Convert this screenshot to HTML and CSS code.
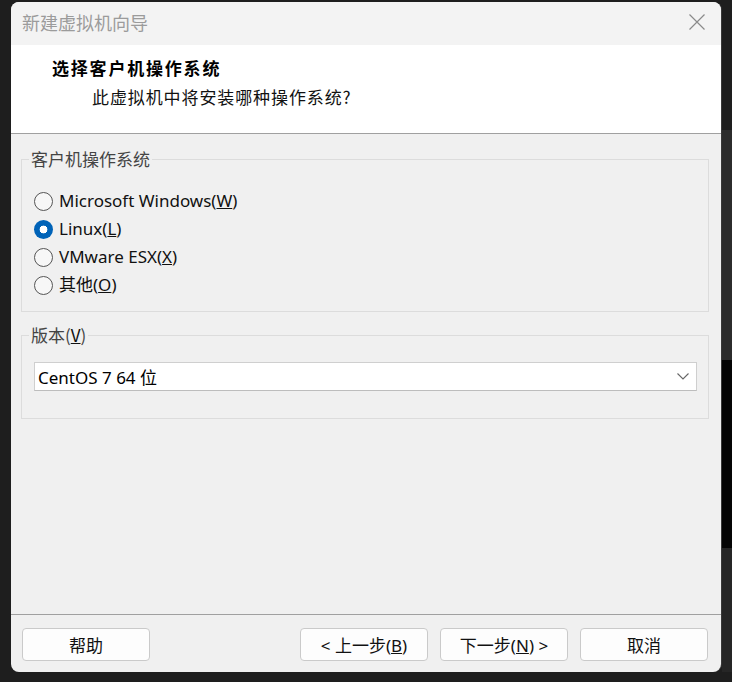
FILE: index.html
```html
<!DOCTYPE html>
<html lang="zh-CN">
<head>
<meta charset="utf-8">
<title>新建虚拟机向导</title>
<link rel="stylesheet" href="styles.css">
</head>
<body>
<div class="desk">
  <div class="window">
    <div class="titlebar">
      <span class="title">新建虚拟机向导</span>
      <svg class="close" width="16" height="16" viewBox="0 0 16 16"><path d="M0.5 0.5L15.5 15.5M15.5 0.5L0.5 15.5"/></svg>
    </div>
    <div class="header">
      <div class="heading">选择客户机操作系统</div>
      <div class="subheading">此虚拟机中将安装哪种操作系统?</div>
    </div>
    <div class="content">
      <fieldset class="group os">
        <legend>客户机操作系统</legend>
        <div class="radio-row"><span class="radio"></span><span class="label">Microsoft Windows(<u>W</u>)</span></div>
        <div class="radio-row"><span class="radio checked"></span><span class="label">Linux(<u>L</u>)</span></div>
        <div class="radio-row"><span class="radio"></span><span class="label">VMware ESX(<u>X</u>)</span></div>
        <div class="radio-row"><span class="radio"></span><span class="label">其他(<u>O</u>)</span></div>
      </fieldset>
      <fieldset class="group version">
        <legend>版本(<u>V</u>)</legend>
        <div class="select">
          <span class="value">CentOS 7 64 位</span>
          <svg class="chevron" width="12" height="7" viewBox="0 0 12 7"><path d="M0.5 0.5L6 6L11.5 0.5"/></svg>
        </div>
      </fieldset>
    </div>
    <div class="footer">
      <button class="btn">帮助</button>
      <div class="nav">
        <button class="btn">&lt; 上一步(<u>B</u>)</button>
        <button class="btn">下一步(<u>N</u>) &gt;</button>
        <button class="btn">取消</button>
      </div>
    </div>
  </div>
  <div class="edge"></div>
</div>
</body>
</html>
```
FILE: styles.css
```css
html, body {
  margin: 0;
  padding: 0;
}
body {
  width: 732px;
  height: 682px;
  overflow: hidden;
  background: #1e1e1e;
  font-family: "Noto Sans", "Noto Sans CJK SC", sans-serif;
  color: #111;
}
.desk {
  display: flex;
  height: 682px;
  box-sizing: border-box;
  padding: 2px 0 0 11px;
}
.window {
  width: 710px;
  height: 670px;
  display: flex;
  flex-direction: column;
  background: #f0f0f0;
  border-radius: 8px;
  overflow: hidden;
  box-shadow: 1px 0 0 #3a3a3a;
}
.edge {
  flex: 1;
  margin-top: -2px;
  margin-left: 1px;
  height: 682px;
  background: linear-gradient(to bottom, #1e1e1e 0, #1e1e1e 130px, #2c2c2c 130px, #2c2c2c 360px, #050505 360px, #050505 548px, #262626 548px, #262626 672px, #1e1e1e 672px);
}
.titlebar {
  height: 43px;
  flex: none;
  box-sizing: border-box;
  background: #f3f3f3;
  display: flex;
  align-items: center;
  justify-content: space-between;
  padding: 0 16px 3px 11px;
}
.title {
  font-family: "Noto Sans CJK SC", sans-serif;
  font-size: 18px;
  color: #9b9b9b;
  line-height: 20px;
}
.close {
  display: block;
}
.close path {
  stroke: #8a8a8a;
  stroke-width: 1.2;
  fill: none;
}
.header {
  flex: none;
  height: 89px;
  box-sizing: border-box;
  background: #ffffff;
  border-bottom: 1px solid #a0a0a0;
  padding: 12px 0 0 41px;
}
.heading {
  font-family: "Noto Sans CJK SC", sans-serif;
  font-size: 17px;
  font-weight: 700;
  line-height: 22px;
  letter-spacing: 1.8px;
  color: #000;
}
.subheading {
  font-family: "Noto Sans CJK SC", sans-serif;
  font-size: 17px;
  line-height: 22px;
  letter-spacing: 0.9px;
  margin: 7px 0 0 40px;
  color: #111;
}
.content {
  flex: 1;
  padding: 15px 12px 0 10px;
}
.group {
  margin: 0;
  border: 1px solid #dcdcdc;
  padding: 18px 11px 12px 12px;
  min-width: 0;
}
.group legend {
  font-family: "Noto Sans CJK SC", sans-serif;
  font-size: 17px;
  line-height: 20px;
  color: #444;
  padding: 0 2px;
  margin-left: -5px;
}
.group legend u {
  color: #111;
}
.radio-row {
  height: 28px;
  display: flex;
  align-items: center;
  gap: 6px;
}
.radio {
  width: 19px;
  height: 19px;
  box-sizing: border-box;
  border: 1px solid #555;
  border-radius: 50%;
  background: #f7f7f7;
  flex: none;
}
.radio.checked {
  border: none;
  background: radial-gradient(circle, #ffffff 0, #ffffff 3.6px, #0063b8 4.2px);
}
.label {
  font-size: 17px;
  line-height: 20px;
  color: #111;
}
.version {
  margin-top: 13px;
  padding-top: 17px;
  padding-bottom: 27px;
}
.select {
  height: 29px;
  box-sizing: border-box;
  background: #fff;
  border: 1px solid #cfcfcf;
  border-bottom-color: #bdbdbd;
  display: flex;
  align-items: center;
  justify-content: space-between;
  padding: 0 7px 0 3px;
}
.value {
  font-size: 17px;
  color: #000;
}
.chevron path {
  stroke: #666;
  stroke-width: 1.1;
  fill: none;
}
.footer {
  flex: none;
  height: 58px;
  box-sizing: border-box;
  border-top: 1px solid #a0a0a0;
  display: flex;
  justify-content: space-between;
  align-items: flex-start;
  padding: 13px 13px 0 11px;
}
.nav {
  display: flex;
  gap: 12px;
}
.btn {
  width: 128px;
  height: 33px;
  box-sizing: border-box;
  background: #fdfdfd;
  border: 1px solid #cacaca;
  border-radius: 4px;
  font-family: "Noto Sans", "Noto Sans CJK SC", sans-serif;
  font-size: 17px;
  color: #111;
  padding: 0;
}
```
